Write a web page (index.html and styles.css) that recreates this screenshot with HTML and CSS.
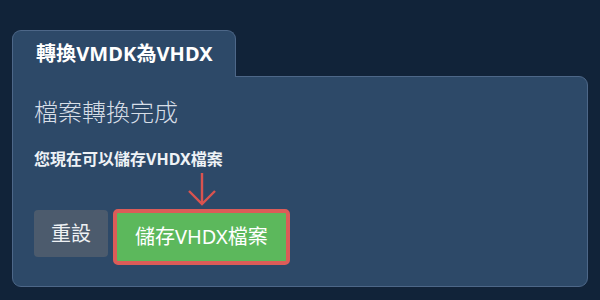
FILE: index.html
```html
<!DOCTYPE html>
<html lang="zh-Hant">
<head>
  <meta charset="UTF-8">
  <meta name="viewport" content="width=device-width, initial-scale=1.0">
  <title>轉換VMDK為VHDX</title>
  <link rel="stylesheet" href="styles.css">
</head>
<body>
  <div class="tabs">
    <div class="tab">轉換VMDK為VHDX</div>
  </div>
  <div class="panel">
    <h2 class="status">檔案轉換完成</h2>
    <p class="hint">您現在可以儲存VHDX檔案</p>
    <div class="pointer">
      <svg width="30" height="36" viewBox="0 0 30 36">
        <path d="M15 2 L15 33 M2 20 L15 33 L28 20" fill="none" stroke="#d9534f" stroke-width="2.4"/>
      </svg>
    </div>
    <div class="actions">
      <button class="btn reset">重設</button>
      <button class="btn save">儲存VHDX檔案</button>
    </div>
  </div>
</body>
</html>
```

FILE: styles.css
```css
* {
  box-sizing: border-box;
}
body {
  margin: 0;
  padding: 30px 12px 0 12px;
  background-color: #112339;
  font-family: "Noto Sans", "Noto Sans CJK TC", sans-serif;
  color: #fff;
}
.tabs {
  display: flex;
}
.tab {
  position: relative;
  z-index: 1;
  background-color: #2d4968;
  border: 1px solid #4d6788;
  border-bottom: none;
  border-radius: 9px 9px 0 0;
  width: 224px;
  height: 47px;
  margin-bottom: -1px;
  padding: 0 0 0 23px;
  font-size: 20px;
  font-weight: bold;
  line-height: 46px;
  letter-spacing: 0.1px;
}
.panel {
  width: 576px;
  height: 211px;
  background-color: #2d4968;
  border: 1px solid #4d6788;
  border-radius: 0 9px 9px 9px;
  padding: 20px 21px;
}
.status {
  margin: 0;
  font-size: 24px;
  font-weight: 300;
  line-height: 29px;
  color: #d7dee7;
}
.hint {
  margin: 22px 0 0 0;
  font-size: 16px;
  font-weight: bold;
  line-height: 22px;
  color: #eef2f6;
}
.pointer {
  height: 39px;
  padding: 1px 0 0 153px;
}
.pointer svg {
  display: block;
}
.actions {
  display: flex;
  align-items: flex-start;
  gap: 5px;
}
.btn {
  font-family: inherit;
  font-size: 20px;
  line-height: 28px;
  color: #fff;
  border: none;
  cursor: pointer;
}
.reset {
  margin-top: 1px;
  height: 47px;
  padding: 0 17px;
  background-color: #4c5b6d;
  border-radius: 4px;
  color: #eef1f4;
}
.save {
  height: 56px;
  padding: 0 18px;
  background-color: #5cb85c;
  border: 4px solid #dc5c58;
  border-radius: 5px;
}
```
